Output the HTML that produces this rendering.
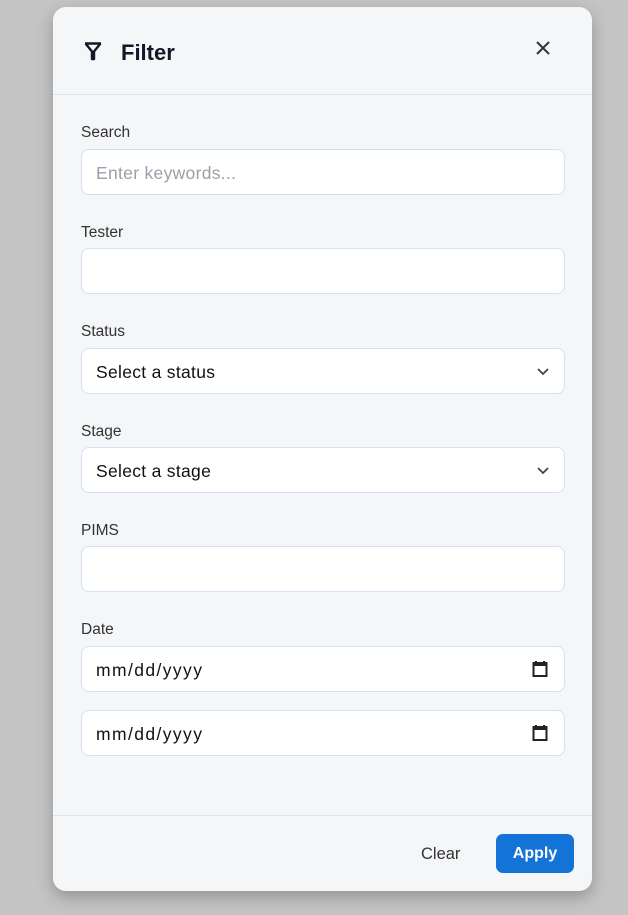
<!DOCTYPE html>
<html><head><style>
body{margin:0;width:628px;height:915px;background:#c4c4c4;font-family:"Liberation Sans",sans-serif;position:relative;overflow:hidden}
.p{position:absolute;left:53px;top:7px;width:539px;height:884px;background:#f4f6f8;border-radius:13px;box-shadow:0 6px 16px rgba(0,0,0,.25)}
.hd{position:absolute;left:0;top:87px;width:539px;height:1px;background:#d6e3f2}
.fd{position:absolute;left:0;top:808px;width:539px;height:1px;background:#d6e3f2}
.t{position:absolute;left:68px;top:33px;font-size:22px;font-weight:bold;color:#111827}
.lb{position:absolute;left:28px;font-size:15.5px;color:#333}
.in{position:absolute;left:28px;width:482px;height:44px;background:#fff;border:1px solid #d3e2f3;border-radius:8px;box-sizing:content-box}
.tx{position:absolute;left:14px;top:13px;font-size:17.5px;color:#111;letter-spacing:.3px}
.dt{letter-spacing:1.4px}
.ph{color:#9aa0a8}
.chev{position:absolute;right:14px;top:15px}
.cal{position:absolute;right:16px;top:13px}
.clr{position:absolute;left:368px;top:838px;font-size:16.5px;color:#333}
.ap{position:absolute;left:443px;top:827px;width:78px;height:39px;background:#1473d6;border-radius:7px;color:#fff;font-size:16px;font-weight:bold;text-align:center;line-height:39px}
</style></head><body>
<div class="p">
<svg style="position:absolute;left:30px;top:34px" width="20" height="20" viewBox="0 0 20 20" fill="none" stroke="#111827" stroke-width="2.4" stroke-linejoin="round"><path d="M2 2.5h16M2.5 2.5l6.5 8v7.5h2v-7.5l6.5-8"/></svg>
<div class="t">Filter</div>
<svg style="position:absolute;left:482px;top:33px" width="16" height="16" viewBox="0 0 16 16" stroke="#333" stroke-width="2"><path d="M2 2l12 12M14 2L2 14"/></svg>
<div class="hd"></div>
<div class="lb" style="top:117px">Search</div>
<div class="in" style="top:142px"><div class="tx ph">Enter keywords...</div></div>
<div class="lb" style="top:217px">Tester</div>
<div class="in" style="top:241px"></div>
<div class="lb" style="top:316px">Status</div>
<div class="in" style="top:341px"><div class="tx">Select a status</div><svg class="chev" width="14" height="14" viewBox="0 0 14 14" fill="none" stroke="#444" stroke-width="1.8"><path d="M2 5l5 5 5-5"/></svg></div>
<div class="lb" style="top:416px">Stage</div>
<div class="in" style="top:440px"><div class="tx">Select a stage</div><svg class="chev" width="14" height="14" viewBox="0 0 14 14" fill="none" stroke="#444" stroke-width="1.8"><path d="M2 5l5 5 5-5"/></svg></div>
<div class="lb" style="top:515px">PIMS</div>
<div class="in" style="top:539px"></div>
<div class="lb" style="top:614px">Date</div>
<div class="in" style="top:639px"><div class="tx dt">mm/dd/yyyy</div><svg class="cal" width="16" height="18" viewBox="0 0 16 18"><rect x="1.5" y="3" width="13" height="13" fill="none" stroke="#222" stroke-width="2"/><rect x="1.5" y="3" width="13" height="3" fill="#222"/><rect x="3" y="1" width="2" height="2" fill="#222"/><rect x="11" y="1" width="2" height="2" fill="#222"/></svg></div>
<div class="in" style="top:703px"><div class="tx dt">mm/dd/yyyy</div><svg class="cal" width="16" height="18" viewBox="0 0 16 18"><rect x="1.5" y="3" width="13" height="13" fill="none" stroke="#222" stroke-width="2"/><rect x="1.5" y="3" width="13" height="3" fill="#222"/><rect x="3" y="1" width="2" height="2" fill="#222"/><rect x="11" y="1" width="2" height="2" fill="#222"/></svg></div>
<div class="fd"></div>
<div class="clr">Clear</div>
<div class="ap">Apply</div>
</div>
</body></html>
